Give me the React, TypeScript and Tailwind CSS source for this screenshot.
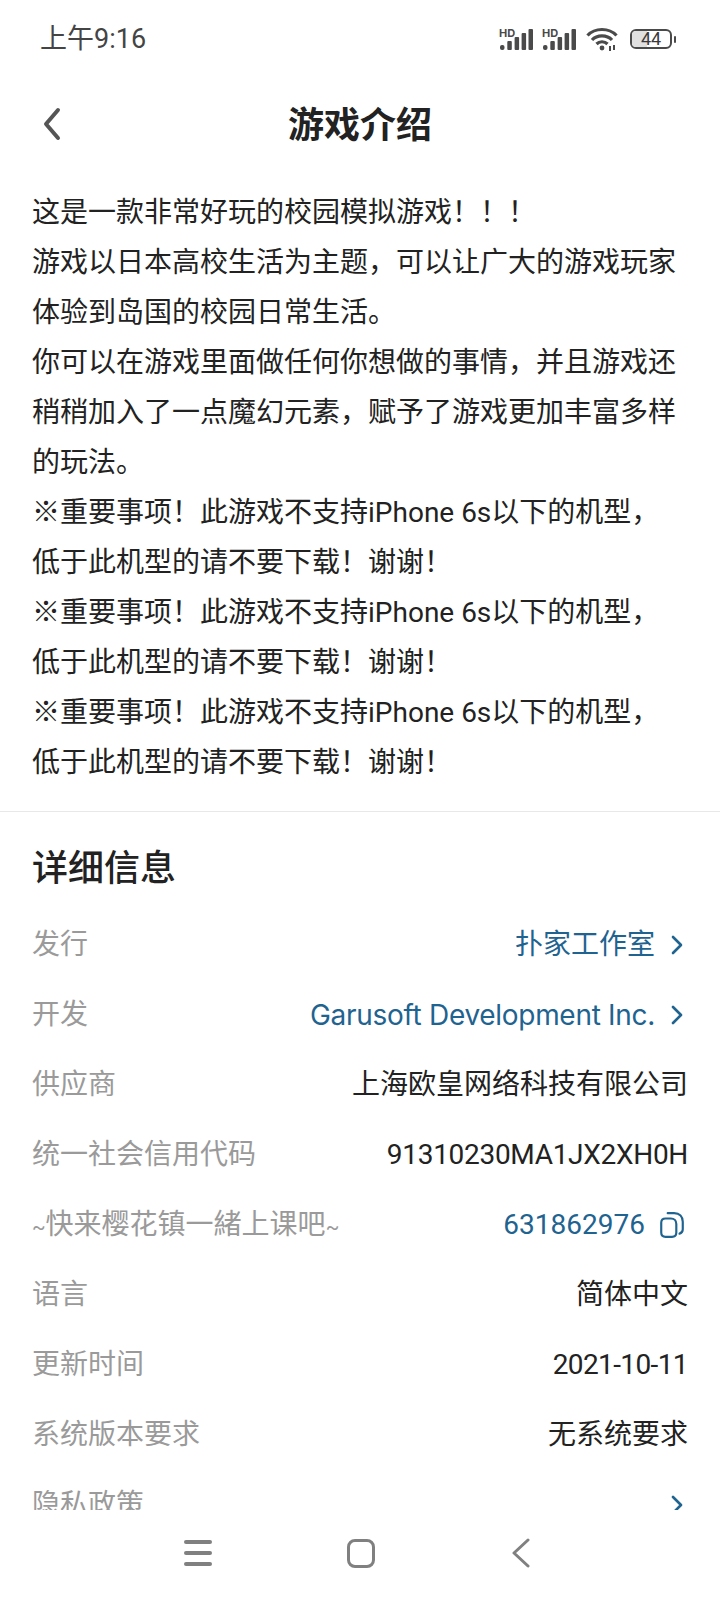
import type { ReactNode } from "react";

const FONT = "font-['Roboto','Noto_Sans_CJK_SC',sans-serif]";

const NOTICE = "重要事项！此游戏不支持iPhone 6s以下的机型，";

const INTRO = [
  "这是一款非常好玩的校园模拟游戏！！！",
  "游戏以日本高校生活为主题，可以让广大的游戏玩家",
  "体验到岛国的校园日常生活。",
  "你可以在游戏里面做任何你想做的事情，并且游戏还",
  "稍稍加入了一点魔幻元素，赋予了游戏更加丰富多样",
  "的玩法。",
  NOTICE,
  "低于此机型的请不要下载！谢谢！",
  NOTICE,
  "低于此机型的请不要下载！谢谢！",
  NOTICE,
  "低于此机型的请不要下载！谢谢！",
];

type Row = { label: ReactNode; value: string; kind?: "link" | "copy"; valueClass?: string };

const ROWS: Row[] = [
  { label: "发行", value: "扑家工作室", kind: "link" },
  {
    label: "开发",
    value: "Garusoft Development Inc.",
    kind: "link",
    valueClass: "font-['Inter','Noto_Sans_CJK_SC',sans-serif] tracking-[-0.3px]",
  },
  { label: "供应商", value: "上海欧皇网络科技有限公司" },
  { label: "统一社会信用代码", value: "91310230MA1JX2XH0H", valueClass: "tracking-[-0.3px]" },
  {
    label: (
      <>
        <span className="text-[20px]">~</span>快来樱花镇一緒上课吧<span className="text-[20px]">~</span>
      </>
    ),
    value: "631862976",
    kind: "copy",
  },
  { label: "语言", value: "简体中文" },
  { label: "更新时间", value: "2021-10-11", valueClass: "tracking-[-0.6px]" },
  { label: "系统版本要求", value: "无系统要求" },
  { label: "隐私政策", value: "", kind: "link" },
];

function Signal() {
  return (
    <svg className="overflow-visible" width="34" height="21" viewBox="0 0 34 21" fill="#4a4a4a">
      <text x="0" y="7.5" fontSize="11" fontWeight="700" fontFamily="Inter, sans-serif">HD</text>
      <rect x="1" y="16" width="4.5" height="5" rx="2" />
      <rect x="8.3" y="12" width="4.5" height="9" rx="1" />
      <rect x="15.6" y="8" width="4.5" height="13" rx="1" />
      <rect x="22.6" y="4" width="4.5" height="17" rx="1" />
      <rect x="29.5" y="0" width="4.5" height="21" rx="1" />
    </svg>
  );
}

function Wifi() {
  return (
    <svg width="32" height="24" viewBox="0 0 32 24" fill="none" stroke="#4a4a4a" strokeWidth="3.2">
      <path d="M1.5 8.5 C9 0.5 23 0.5 30.5 8.5" />
      <path d="M6 13 C11 7.5 21 7.5 26 13" />
      <path d="M10.5 17 C13.5 14 18.5 14 21.5 17" />
      <circle cx="16" cy="21" r="2.4" fill="#4a4a4a" stroke="none" />
      <path d="M24 19 V24 M28 18 V23" strokeWidth="2" />
    </svg>
  );
}

function Battery() {
  return (
    <div className="flex items-center gap-[2px]">
      <div className="relative flex h-[20px] w-[42px] items-center justify-center overflow-hidden rounded-[6px] border-2 border-[#4a4a4a]">
        <div className="absolute inset-y-0 left-0 w-[15px] bg-[#e0e0e0]" />
        <span className="relative text-[18px] leading-none text-[#3a3a3a]">44</span>
      </div>
      <div className="h-[7px] w-[2px] rounded-full bg-[#4a4a4a]" />
    </div>
  );
}

function Chevron() {
  return (
    <svg width="12" height="20" viewBox="0 0 12 20" fill="none" stroke="#1f6390" strokeWidth="2.6" strokeLinecap="round" strokeLinejoin="round">
      <path d="M2 2 L10 10 L2 18" />
    </svg>
  );
}

function CopyIcon() {
  return (
    <svg width="26" height="28" viewBox="0 0 24 26" fill="none" stroke="#1f6390" strokeWidth="2" strokeLinejoin="round">
      <path d="M2 11 C2 8.5 3.5 7 6 7 H11 C14 7 16 9 16 12 V20 C16 22.5 14.5 24 12 24 H6 C3.5 24 2 22.5 2 20 Z" />
      <path d="M8 2 H14 C19 2 22 5 22 10 V17 C22 19 21 20.5 19 21" strokeLinecap="round" />
    </svg>
  );
}

function DetailRow({ row }: { row: Row }) {
  const isBlue = row.kind === "link" || row.kind === "copy";
  return (
    <div className="flex h-[70px] shrink-0 items-center justify-between">
      <span className="text-[28px] text-[#9a9a9a]">{row.label}</span>
      <div className={`flex items-center ${isBlue ? "text-[#1f6390]" : "text-[#222222]"}`}>
        <span className={`text-[28px] ${row.valueClass ?? ""}`}>{row.value}</span>
        {row.kind === "link" && (
          <span className="ml-[16px] mr-[5px] flex">
            <Chevron />
          </span>
        )}
        {row.kind === "copy" && (
          <span className="ml-[14px] mr-[3px] flex">
            <CopyIcon />
          </span>
        )}
      </div>
    </div>
  );
}

export default function App() {
  return (
    <div className={`${FONT} flex h-[1600px] w-[720px] flex-col overflow-hidden bg-white text-[#222222]`}>
      <div className="flex h-[78px] shrink-0 items-center justify-between pl-[40px] pr-[44px]">
        <span className="text-[27px] text-[#444444]">上午9:16</span>
        <div className="flex items-center gap-[9px]">
          <Signal />
          <Signal />
          <div className="ml-[1px] flex">
            <Wifi />
          </div>
          <div className="ml-[3px] flex">
            <Battery />
          </div>
        </div>
      </div>

      <div className="relative flex h-[92px] shrink-0 items-center justify-center pt-[4px]">
        <svg className="absolute left-[42px] top-[29px]" width="20" height="34" viewBox="0 0 20 34" fill="none" stroke="#555555" strokeWidth="4" strokeLinecap="round" strokeLinejoin="round">
          <path d="M16 3 L4 17 L16 31" />
        </svg>
        <h1 className="text-[36px] font-bold text-[#222222]">游戏介绍</h1>
      </div>

      <div className="min-h-0 flex-1 overflow-hidden">
        <div className="border-b border-[#e8e8e8] px-[32px] pb-[23px] pt-[18px] text-[28px] leading-[50px] text-[#222222]">
          {INTRO.map((line, i) => (
            <p key={i} className="whitespace-nowrap">
              {line === NOTICE && <span className="font-['Noto_Sans_CJK_SC',sans-serif] leading-none">※</span>}
              {line}
            </p>
          ))}
        </div>
        <div className="px-[32px]">
          <h2 className="pb-[16px] pt-[32px] text-[36px] font-medium leading-[50px] text-[#222222]">详细信息</h2>
          {ROWS.map((row, i) => (
            <DetailRow key={i} row={row} />
          ))}
        </div>
      </div>

      <div className="flex h-[90px] shrink-0 items-start justify-center bg-white pr-[6px] pt-[28px]">
        <div className="flex w-[347px] items-center justify-between">
          <div className="flex h-[26px] w-[28px] flex-col justify-between">
            <div className="h-[4px] rounded-full bg-[#808080]" />
            <div className="h-[4px] rounded-full bg-[#808080]" />
            <div className="h-[4px] rounded-full bg-[#808080]" />
          </div>
          <div className="h-[29px] w-[28px] rounded-[8px] border-[3.5px] border-[#808080]" />
          <svg width="20" height="30" viewBox="0 0 20 30" fill="none" stroke="#808080" strokeWidth="3" strokeLinecap="round" strokeLinejoin="round">
            <path d="M17 2 L3 15 L17 28" />
          </svg>
        </div>
      </div>
    </div>
  );
}
